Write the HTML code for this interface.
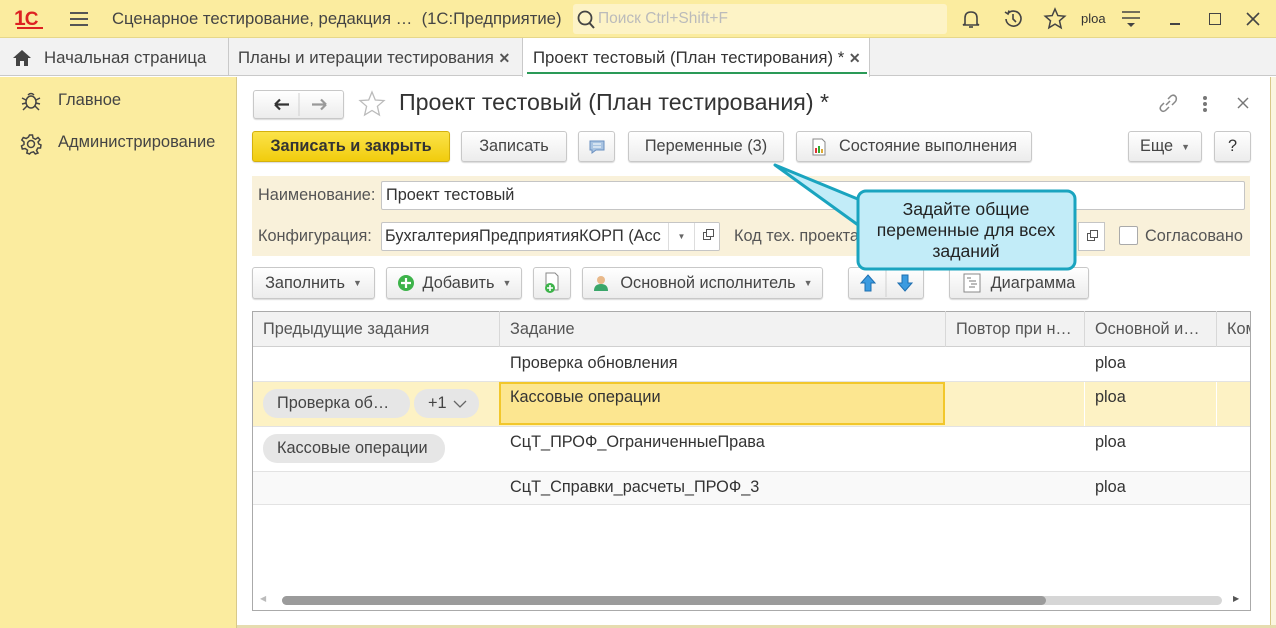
<!DOCTYPE html>
<html><head><meta charset="utf-8"><style>
*{box-sizing:border-box;margin:0;padding:0}
body{width:1276px;height:628px;overflow:hidden;font-family:"Liberation Sans",sans-serif;font-size:16px;color:#333;background:#fff;position:relative}
.a{position:absolute}
.btn{position:absolute;border:1px solid #c8c8c8;border-radius:3px;background:linear-gradient(#fff,#ececec);box-shadow:0 1px 1px rgba(0,0,0,.15);font-size:16.3px;color:#444;display:flex;align-items:center;justify-content:center;white-space:nowrap}
.t{position:absolute;white-space:nowrap}
.dd{font-size:9px;color:#666;margin-left:8px}
.pill{position:absolute;background:#e6e6e6;border-radius:14px;height:29px;display:flex;align-items:center;font-size:16.3px;color:#444}
.hd{position:absolute;top:311px;height:36px;line-height:36px;font-size:16.3px;color:#555;padding-left:10px;border-right:1px solid #d8d8d8;white-space:nowrap;overflow:hidden}
.c{font-size:16.3px}
</style></head><body>
<!-- top bar -->
<div class="a" style="left:0;top:0;width:1276px;height:38px;background:#fbec9f;border-bottom:1px solid #e6d78a"></div>
<div class="t" style="left:14px;top:7px;color:#d22;font-weight:bold;font-size:21px;letter-spacing:-1px">1<span style="font-size:19px">C</span></div>
<div class="a" style="left:17px;top:27px;width:26px;height:2px;background:#d22"></div>
<div class="a" style="left:70px;top:12px;width:18px;height:2px;background:#555;box-shadow:0 6px 0 #555,0 12px 0 #555"></div>
<div class="t" style="left:112px;top:9px;font-size:16.7px;color:#444">Сценарное тестирование, редакция …&nbsp;&nbsp;(1С:Предприятие)</div>
<div class="a" style="left:573px;top:4px;width:374px;height:30px;background:#fdf3c6;border-radius:3px"></div>
<svg class="a" style="left:576px;top:9px" width="20" height="22"><circle cx="9" cy="9" r="6.5" fill="none" stroke="#444" stroke-width="1.8"/><line x1="13.5" y1="14" x2="18" y2="19" stroke="#444" stroke-width="2"/></svg>
<div class="t" style="left:598px;top:10px;font-size:15.5px;color:#bbb">Поиск Ctrl+Shift+F</div>
<svg class="a" style="left:960px;top:8px" width="22" height="22" fill="none" stroke="#444" stroke-width="1.6"><path d="M5 16 L5 10 Q5 4 11 4 Q17 4 17 10 L17 16 L19 17 L3 17 L5 16Z"/><path d="M9 19 L13 19"/></svg>
<svg class="a" style="left:1002px;top:8px" width="22" height="22" fill="none" stroke="#444" stroke-width="1.6"><path d="M4 11 A7.5 7.5 0 1 0 6 5.5"/><path d="M3 4 L6 6 L7 2.5"/><path d="M11 6 L11 11 L14 14"/></svg>
<svg class="a" style="left:1043px;top:7px" width="24" height="24" fill="none" stroke="#444" stroke-width="1.5"><path d="M12 2 L14.8 8.6 L21.8 9.2 L16.5 13.8 L18.1 20.8 L12 17.1 L5.9 20.8 L7.5 13.8 L2.2 9.2 L9.2 8.6Z"/></svg>
<div class="t" style="left:1081px;top:11px;font-size:13px;color:#333">ploa</div>
<svg class="a" style="left:1120px;top:9px" width="22" height="20" stroke="#444" stroke-width="1.6"><line x1="2" y1="3" x2="20" y2="3"/><line x1="2" y1="9" x2="20" y2="9"/><path d="M7 14 L15 14 L11 18Z" fill="#444" stroke="none"/></svg>
<div class="a" style="left:1170px;top:23px;width:10px;height:2px;background:#444"></div>
<div class="a" style="left:1209px;top:13px;width:12px;height:12px;border:1.5px solid #444"></div>
<svg class="a" style="left:1246px;top:12px" width="14" height="14" stroke="#444" stroke-width="1.6"><line x1="1" y1="1" x2="13" y2="13"/><line x1="13" y1="1" x2="1" y2="13"/></svg>
<!-- tabs -->
<div class="a" style="left:0;top:38px;width:1276px;height:38px;background:#f2f2f2;border-bottom:1px solid #c9c9c9"></div>
<svg class="a" style="left:12px;top:49px" width="20" height="18"><path d="M1 9 L10 1 L19 9 L16 9 L16 17 L12 17 L12 12 L8 12 L8 17 L4 17 L4 9Z" fill="#444"/></svg>
<div class="t" style="left:44px;top:48px;font-size:16.8px;color:#444">Начальная страница</div>
<div class="a" style="left:228px;top:38px;width:1px;height:38px;background:#c9c9c9"></div>
<div class="t" style="left:238px;top:48px;font-size:16.8px;color:#444">Планы и итерации тестирования <span style="font-weight:bold;font-size:14px;color:#555">✕</span></div>
<div class="a" style="left:522px;top:38px;width:348px;height:39px;background:#fff;border-left:1px solid #c9c9c9;border-right:1px solid #c9c9c9"></div>
<div class="a" style="left:527px;top:72px;width:340px;height:2px;background:#2a9a57"></div>
<div class="t" style="left:533px;top:48px;font-size:16.8px;color:#333">Проект тестовый (План тестирования) * <span style="font-weight:bold;font-size:14px;color:#555">✕</span></div>
<!-- sidebar -->
<div class="a" style="left:0;top:77px;width:237px;height:551px;background:#fbec9f;border-right:1px solid #d8c98a"></div>
<svg class="a" style="left:20px;top:90px" width="22" height="22" fill="none" stroke="#444" stroke-width="1.5"><ellipse cx="11" cy="12" rx="5" ry="6"/><path d="M8 5 Q11 2 14 5 M2 8 L6 10 M20 8 L16 10 M2 14 L6 13 M20 14 L16 13 M3 20 L7 16 M19 20 L15 16"/></svg>
<div class="t" style="left:58px;top:91px;font-size:16.5px;color:#444">Главное</div>
<svg class="a" style="left:20px;top:133px" width="22" height="22" fill="none" stroke="#444" stroke-width="1.5"><circle cx="11" cy="11" r="3.5"/><path d="M9.5 2 L12.5 2 L13 5 L15.5 6.3 L18 4.5 L20 6.8 L18 9 L18.8 11 L21 12 L20.5 15 L17.8 15 L16.5 17.5 L18 20 L15.3 21 L13.5 18.8 L11 19.5 L9.5 21 L6.8 20 L7.5 17.2 L5.2 15.5 L2.3 16 L1.5 13 L4 11.5 L4 9 L1.8 7 L3.3 4.5 L6.2 5.5 L8.5 4Z"/></svg>
<div class="t" style="left:58px;top:133px;font-size:16.5px;color:#444">Администрирование</div>
<!-- right border -->
<div class="a" style="left:1270px;top:77px;width:6px;height:551px;background:#fbf6e0;border-left:1px solid #d8c98a"></div>
<div class="a" style="left:237px;top:625px;width:1039px;height:3px;background:#e6dcb0"></div>
<!-- title row -->
<div class="btn" style="left:253px;top:90px;width:91px;height:29px;justify-content:flex-start">
<svg width="90" height="27"><path d="M21 13.5 L35 13.5 M21 13.5 L26 8.5 M21 13.5 L26 18.5" stroke="#333" stroke-width="2.2" fill="none"/><line x1="45" y1="2" x2="45" y2="25" stroke="#d0d0d0"/><path d="M58 13.5 L72 13.5 M72 13.5 L67 8.5 M72 13.5 L67 18.5" stroke="#999" stroke-width="2.2" fill="none"/></svg></div>
<svg class="a" style="left:358px;top:90px" width="28" height="28" fill="none" stroke="#bbb" stroke-width="1.3"><path d="M14 2 L17.3 10 L26 10.6 L19.4 16.3 L21.4 25 L14 20.5 L6.6 25 L8.6 16.3 L2 10.6 L10.7 10Z"/></svg>
<div class="t" style="left:399px;top:89px;font-size:23.2px;color:#333">Проект тестовый (План тестирования) *</div>
<svg class="a" style="left:1157px;top:93px" width="22" height="20" fill="none" stroke="#888" stroke-width="1.5"><path d="M9 12 L13 8 M7 10 L4 13 Q2 16 5 18 Q7 19 9 17 L12 14 M11 6 L14 3 Q17 1 19 4 Q20 7 18 9 L15 12"/></svg>
<div class="a" style="left:1203px;top:96px;width:4px;height:4px;background:#777;border-radius:2px;box-shadow:0 6px 0 #777,0 12px 0 #777"></div>
<svg class="a" style="left:1237px;top:97px" width="12" height="12" stroke="#777" stroke-width="1.4"><line x1="1" y1="1" x2="11" y2="11"/><line x1="11" y1="1" x2="1" y2="11"/></svg>
<!-- button row -->
<div class="btn" style="left:252px;top:131px;width:198px;height:31px;background:linear-gradient(#fbe34a,#f1cc0d);border-color:#d4b10d;font-weight:bold;color:#333">Записать и закрыть</div>
<div class="btn" style="left:461px;top:131px;width:106px;height:31px">Записать</div>
<div class="btn" style="left:578px;top:131px;width:37px;height:31px"><svg width="18" height="16"><path d="M2 2 L16 2 L16 11 L8 11 L4 14 L4 11 L2 11Z" fill="#a9c4e2" stroke="#6a90c0"/><line x1="5" y1="5" x2="13" y2="5" stroke="#fff"/><line x1="5" y1="8" x2="13" y2="8" stroke="#fff"/></svg></div>
<div class="btn" style="left:628px;top:131px;width:156px;height:31px">Переменные (3)</div>
<div class="btn" style="left:796px;top:131px;width:236px;height:31px"><svg width="16" height="18" style="margin-right:12px"><path d="M2 1 L11 1 L14 4 L14 17 L2 17Z" fill="#fff" stroke="#888"/><rect x="4" y="10" width="2" height="5" fill="#d33"/><rect x="7" y="8" width="2" height="7" fill="#3a3"/><rect x="10" y="11" width="2" height="4" fill="#da3"/></svg>Состояние выполнения</div>
<div class="btn" style="left:1128px;top:131px;width:74px;height:31px">Еще<span class="dd">▼</span></div>
<div class="btn" style="left:1214px;top:131px;width:37px;height:31px;color:#333">?</div>
<!-- form area -->
<div class="a" style="left:252px;top:176px;width:998px;height:80px;background:#f9f1da"></div>
<div class="t c" style="left:258px;top:186px;color:#555">Наименование:</div>
<div class="a c" style="left:381px;top:181px;width:864px;height:29px;background:#fff;border:1px solid #c5c5c5;border-radius:2px;padding:4px 4px;color:#333">Проект тестовый</div>
<div class="t c" style="left:258px;top:227px;color:#555">Конфигурация:</div>
<div class="a c" style="left:381px;top:222px;width:339px;height:29px;background:#fff;border:1px solid #c5c5c5;border-radius:2px;color:#333;overflow:hidden"><span style="position:absolute;left:3px;top:4px;white-space:nowrap">БухгалтерияПредприятияКОРП (Асс</span><div style="position:absolute;left:286px;top:0;width:26px;height:27px;background:#fff;border-left:1px solid #ddd;font-size:8px;color:#666;text-align:center;line-height:27px">▼</div><div style="position:absolute;left:312px;top:0;width:26px;height:27px;background:#fff;border-left:1px solid #ddd"><div style="position:absolute;left:8px;top:9px;width:8px;height:8px;border:1px solid #555"></div><div style="position:absolute;left:11px;top:6px;width:8px;height:8px;border:1px solid #555;background:#fff"></div></div></div>
<div class="t c" style="left:734px;top:227px;color:#555">Код тех. проекта:</div>
<div class="a" style="left:1078px;top:222px;width:27px;height:29px;background:#fff;border:1px solid #c5c5c5"><div style="position:absolute;left:8px;top:10px;width:8px;height:8px;border:1px solid #555"></div><div style="position:absolute;left:11px;top:7px;width:8px;height:8px;border:1px solid #555;background:#fff"></div></div>
<div class="a" style="left:1119px;top:226px;width:19px;height:19px;background:#fff;border:1px solid #aaa;border-radius:2px"></div>
<div class="t c" style="left:1145px;top:227px;color:#555">Согласовано</div>
<!-- second toolbar -->
<div class="btn" style="left:252px;top:267px;width:123px;height:32px">Заполнить<span class="dd">▼</span></div>
<div class="btn" style="left:386px;top:267px;width:136px;height:32px"><svg width="18" height="18" style="margin-right:8px"><circle cx="9" cy="9" r="8" fill="#3db34a"/><path d="M9 4 V14 M4 9 H14" stroke="#fff" stroke-width="2.2"/></svg>Добавить<span class="dd">▼</span></div>
<div class="btn" style="left:533px;top:267px;width:38px;height:32px"><svg width="18" height="22"><path d="M3 1 L12 1 L15 4 L15 18 L3 18Z" fill="#fff" stroke="#888"/><circle cx="7" cy="16" r="5" fill="#3db34a"/><path d="M7 13 V19 M4 16 H10" stroke="#fff" stroke-width="1.6"/></svg></div>
<div class="btn" style="left:582px;top:267px;width:241px;height:32px"><svg width="18" height="18" style="margin-right:10px"><circle cx="9" cy="6" r="4" fill="#e9b98a"/><path d="M2 17 Q2 10 9 10 Q16 10 16 17Z" fill="#3aa66a"/></svg>Основной исполнитель<span class="dd">▼</span></div>
<div class="btn" style="left:848px;top:267px;width:76px;height:32px;justify-content:flex-start"><svg width="74" height="30"><path d="M19 7 L26 15 L22 15 L22 23 L16 23 L16 15 L12 15Z" fill="#3b9be0" stroke="#1e6fb0"/><line x1="37" y1="1" x2="37" y2="29" stroke="#d0d0d0"/><path d="M56 23 L63 15 L59 15 L59 7 L53 7 L53 15 L49 15Z" fill="#3b9be0" stroke="#1e6fb0"/></svg></div>
<div class="btn" style="left:949px;top:267px;width:140px;height:32px"><svg width="18" height="20" style="margin-right:10px"><rect x="1" y="1" width="16" height="18" fill="#fff" stroke="#888"/><path d="M4 5 H8 M6 8 H13 M8 11 H14 M6 14 H12" stroke="#777"/></svg>Диаграмма</div>
<!-- table -->
<div class="a" style="left:252px;top:311px;width:999px;height:300px;border:1px solid #aaa;background:#fff;overflow:hidden"></div>
<div class="a" style="left:253px;top:312px;width:997px;height:35px;background:#f2f2f2;border-bottom:1px solid #d0d0d0"></div>
<div class="hd" style="left:253px;width:247px">Предыдущие задания</div>
<div class="hd" style="left:500px;width:446px">Задание</div>
<div class="hd" style="left:946px;width:139px">Повтор при н…</div>
<div class="hd" style="left:1085px;width:132px">Основной и…</div>
<div class="hd" style="left:1217px;width:33px;border-right:none">Ком</div>
<div class="a" style="left:253px;top:381px;width:997px;height:1px;background:#e3e3e3"></div>
<div class="a" style="left:253px;top:382px;width:997px;height:44px;background:#fdf2c4"></div>
<div class="a" style="left:1084px;top:382px;width:1px;height:44px;background:#fff"></div>
<div class="a" style="left:1216px;top:382px;width:1px;height:44px;background:#fff"></div>
<div class="a" style="left:499px;top:382px;width:446px;height:43px;background:#fce690;border:2.5px solid #f2c72b"></div>
<div class="a" style="left:253px;top:426px;width:997px;height:1px;background:#e3e3e3"></div>
<div class="a" style="left:253px;top:471px;width:997px;height:34px;background:#f9f9f9;border-top:1px solid #e3e3e3;border-bottom:1px solid #e3e3e3"></div>
<div class="t c" style="left:510px;top:354px">Проверка обновления</div>
<div class="t c" style="left:510px;top:388px">Кассовые операции</div>
<div class="t c" style="left:510px;top:433px">СцТ_ПРОФ_ОграниченныеПрава</div>
<div class="t c" style="left:510px;top:478px">СцТ_Справки_расчеты_ПРОФ_3</div>
<div class="t c" style="left:1095px;top:354px">ploa</div>
<div class="t c" style="left:1095px;top:388px">ploa</div>
<div class="t c" style="left:1095px;top:433px">ploa</div>
<div class="t c" style="left:1095px;top:478px">ploa</div>
<div class="pill" style="left:263px;top:389px;width:147px;padding-left:14px">Проверка об…</div>
<div class="pill" style="left:414px;top:389px;width:65px;padding-left:14px">+1 <svg width="14" height="10" style="margin-left:6px"><path d="M1 2 L7 8 L13 2" fill="none" stroke="#666" stroke-width="1.3"/></svg></div>
<div class="pill" style="left:263px;top:434px;width:182px;padding-left:14px">Кассовые операции</div>
<!-- scrollbar -->
<div class="a" style="left:282px;top:596px;width:940px;height:9px;background:#d6d6d6;border-radius:5px"></div>
<div class="a" style="left:282px;top:596px;width:764px;height:9px;background:#9b9b9b;border-radius:5px"></div>
<div class="t" style="left:1233px;top:594px;font-size:8px;color:#555">▶</div>
<div class="t" style="left:260px;top:594px;font-size:8px;color:#bbb">◀</div>
<!-- callout -->
<svg class="a" style="left:760px;top:150px" width="340" height="130">
<path d="M15 15 L105 52 L105 80Z" fill="#c2ecf8" stroke="#1aa4bf" stroke-width="3" stroke-linejoin="round"/>
<rect x="98" y="41" width="217" height="78" rx="8" fill="#c2ecf8" stroke="#1aa4bf" stroke-width="3"/>
<path d="M101 54 L101 76 L108 76 L108 54Z" fill="#c2ecf8"/>
</svg>
<div class="a" style="left:858px;top:199px;width:216px;text-align:center;font-size:17.6px;line-height:21px;color:#222">Задайте общие<br>переменные для всех<br>заданий</div>
</body></html>
